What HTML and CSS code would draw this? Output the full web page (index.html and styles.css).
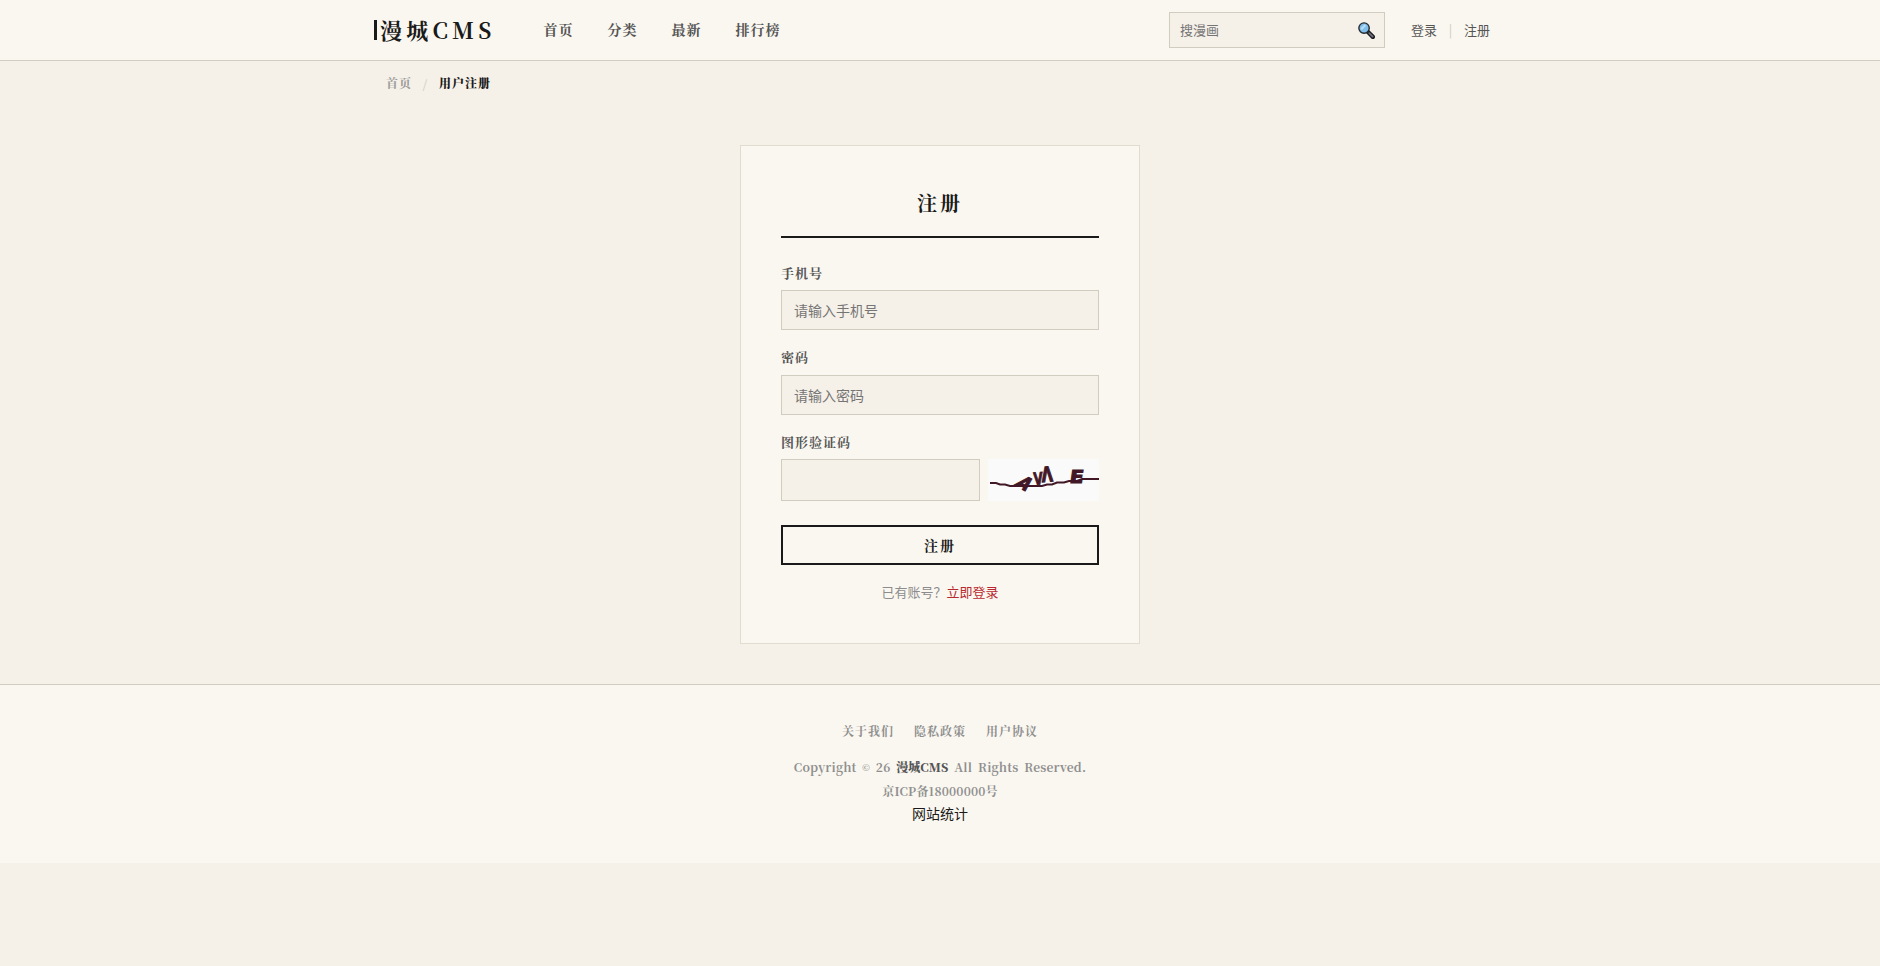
FILE: index.html
```html
<!DOCTYPE html>
<html lang="zh-CN">
<head>
<meta charset="utf-8">
<title>用户注册 - 漫城CMS</title>
<link rel="stylesheet" href="styles.css">
</head>
<body>
<header class="header">
  <div class="header-inner">
    <a class="logo">漫城CMS</a>
    <nav class="nav"><a>首页</a><a>分类</a><a>最新</a><a>排行榜</a></nav>
    <form class="search"><input class="search-input" placeholder="搜漫画">
      <svg class="search-icon" viewBox="0 0 16 16">
        <path d="M9 9l5 5" stroke="#1c1c22" stroke-width="4" stroke-linecap="round"/>
        <path d="M10.500 10.500l3.300 3.300" stroke="#73737b" stroke-width="1.500" stroke-linecap="round"/>
        <circle cx="5.700" cy="5.700" r="4.900" fill="#7fbdea" stroke="#25282d" stroke-width="1.300"/>
        <path d="M3 6.800L7 2.800" stroke="#b9ddf5" stroke-width="2"/>
      </svg>
    </form>
    <div class="user"><a>登录</a><span class="sep">|</span><a>注册</a></div>
  </div>
</header>
<div class="crumbs"><a>首页</a><span class="slash">/</span><b>用户注册</b></div>
<main class="card">
  <h1 class="title">注册</h1>
  <label class="label label-first">手机号</label>
  <input class="input" placeholder="请输入手机号">
  <label class="label">密码</label>
  <input class="input" placeholder="请输入密码">
  <label class="label label-captcha">图形验证码</label>
  <div class="captcha-row">
    <input class="input captcha-input">
    <svg class="captcha" viewBox="0 0 111 42">
      <rect width="111" height="42" fill="#fbfafb"/>
      <g class="captcha-text">
        <text transform="matrix(.85 .46 -.85 .8 26 26)">A</text>
        <text transform="translate(46 26) rotate(-4) scale(.7 1)">V</text>
        <text transform="translate(54 23) rotate(-4) scale(.85 1.2)">Λ</text>
        <text transform="translate(81 23.500) skewX(-8) scale(1.200 1.050)">E</text>
      </g>
      <path class="captcha-line" d="M2 24h6l4 1.500h5l5 1.500h32l5-1.500h5l5-2h7l5-1.500h8l5-2h20"/>
    </svg>
  </div>
  <button class="submit">注册</button>
  <p class="login-tip">已有账号？<a>立即登录</a></p>
</main>
<footer class="footer">
  <div class="footer-links"><a>关于我们</a><a>隐私政策</a><a>用户协议</a></div>
  <p class="copy copy-main">Copyright <span class="mark">©</span> 26 <strong>漫城CMS</strong> All Rights Reserved.</p>
  <p class="copy">京ICP备18000000号</p>
  <p class="stats">网站统计</p>
</footer>
</body>
</html>
```
FILE: styles.css
```css
* { box-sizing: border-box; margin: 0; padding: 0; }
body {
  background: #f5f0e8;
  color: #1a1a1a;
  font: 14px/1.7 "Noto Sans CJK SC", sans-serif;
}
.header, .crumbs, .label, .title, .submit, .footer {
  font-family: "Noto Serif CJK SC", "Noto Serif SC", serif;
}
.header { height: 61px; background: #faf7f0; border-bottom: 1px solid #d0ccc0; }
.header-inner { width: 1132px; height: 60px; margin: 0 auto; display: flex; align-items: center; }
.logo { width: 169.5px; font-size: 22px; font-weight: 700; letter-spacing: 4.2px; line-height: 60px; display: flex; align-items: center; gap: 3px; }
.logo::before { content: ""; width: 3px; height: 20px; background: #1a1a1a; }
.nav { display: flex; gap: 34px; font-weight: 700; letter-spacing: 1px; color: #555; line-height: 24px; padding-bottom: 3px; }
.search { display: flex; align-items: center; width: 216px; height: 36px; margin-left: auto; background: #f5f0e8; border: 1px solid #d0ccc0; }
.search-input { flex: 1; min-width: 0; padding: 0 10px 1px; border: 0; background: none; font: 13px "Noto Sans CJK SC", sans-serif; }
.search-icon { width: 17px; height: 17px; margin: 1px 9px 0 0; fill: none; }
.user { width: 80px; margin: 0 15px 1px 26px; display: flex; white-space: nowrap; font: 13px/20px "Noto Sans CJK SC", sans-serif; color: #555; }
.sep { color: #d0ccc0; width: 27px; flex: none; text-align: center; }
.crumbs { width: 1108px; height: 44px; margin: 0 auto; display: flex; font-size: 12px; line-height: 44px; letter-spacing: 1px; color: #999; font-weight: 700; }
.slash { width: 27px; text-align: center; color: #d0ccc0; }
.crumbs b { color: #1a1a1a; }
.card { width: 400px; height: 499px; margin: 40px auto; padding: 40px; background: #faf7f0; border: 1px solid #e0dcd0; }
.title { height: 52px; line-height: 34px; font-size: 20px; letter-spacing: 3px; text-align: center; border-bottom: 2px solid #1a1a1a; margin-bottom: 24px; }
.label { display: block; height: 28px; line-height: 20px; font-size: 13px; font-weight: 700; letter-spacing: 1px; color: #555; }
.label-first { line-height: 21px; }
.label-captcha { height: 27px; }
.input { display: block; width: 100%; height: 40px; padding: 0 12px; border: 1px solid #d0ccc0; background: #f5f0e8; font: 14px "Noto Sans CJK SC", sans-serif; margin-bottom: 17px; }
.captcha-row { display: flex; gap: 8px; height: 42px; margin-bottom: 24px; }
.captcha-input { width: 199px; height: 42px; margin: 0; }
.captcha { width: 111px; height: 42px; }
.captcha-text { font: bold 17px "DejaVu Sans", sans-serif; fill: #421827; stroke: #421827; stroke-width: 1; }
.captcha-line { fill: none; stroke: #421827; stroke-width: 2; }
.submit { display: block; width: 100%; height: 40px; border: 2px solid #1a1a1a; background: #faf7f0; color: #1a1a1a; font-size: 14px; font-weight: 700; letter-spacing: 2px; }
.login-tip { margin-top: 16px; text-align: center; font-size: 13px; line-height: 21px; color: #8c8c8c; }
.login-tip a { color: #b8292f; }
.footer { height: 179px; padding-top: 35px; border-top: 1px solid #d0ccc0; background: #faf7f0; text-align: center; }
.footer-links { display: flex; justify-content: center; gap: 20px; height: 35px; font-size: 12px; line-height: 22px; font-weight: 700; letter-spacing: 1px; color: #8f8f8f; }
.copy { font-size: 12px; line-height: 24px; font-weight: 700; letter-spacing: .2px; color: #8f8f8f; }
.copy-main { word-spacing: 2.6px; }
.mark { font-size: 9px; vertical-align: 1px; line-height: 1; }
.copy strong { color: #555; letter-spacing: 0; }
.stats { font: 14px/21px "Noto Sans CJK SC", sans-serif; }
```
